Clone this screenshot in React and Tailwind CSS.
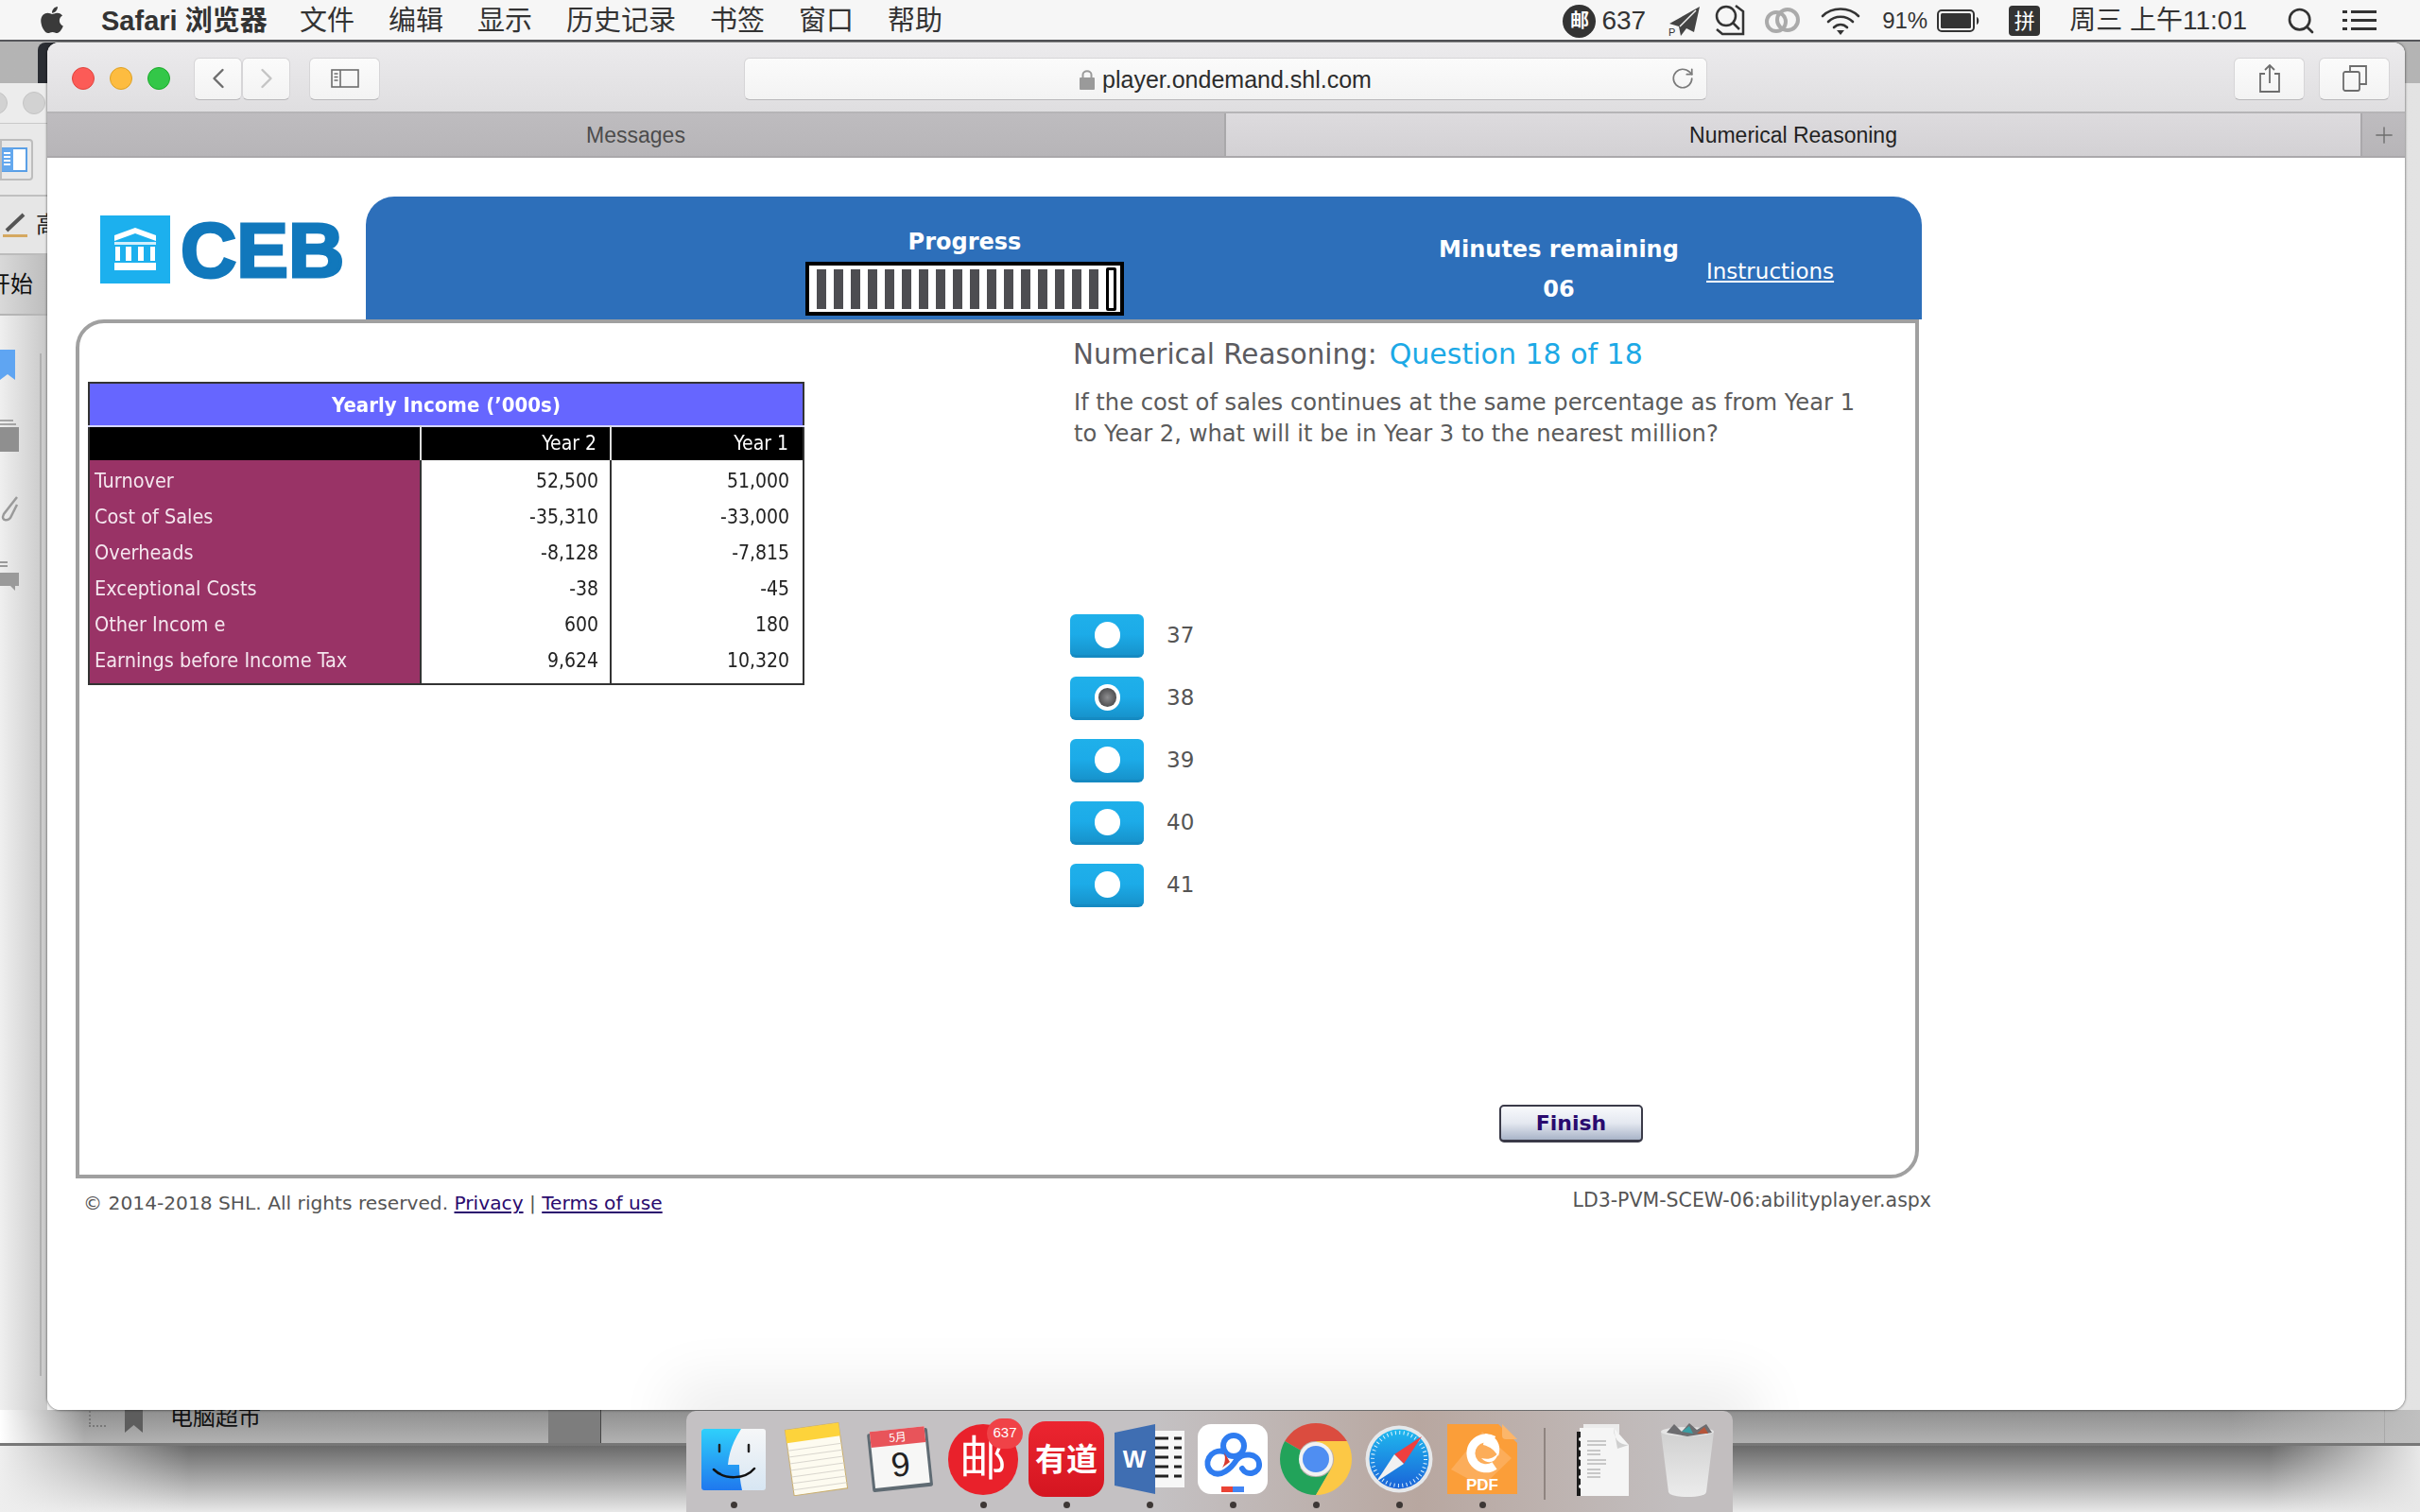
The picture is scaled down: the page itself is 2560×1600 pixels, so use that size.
import { ChevronLeft, ChevronRight, RotateCw, Search, Plus } from "lucide-react";
import { FaApple } from "react-icons/fa";

const sans = "[font-family:'Liberation_Sans','Noto_Sans_CJK_SC',sans-serif]";
const verdana = "[font-family:'DejaVu_Sans',sans-serif]";
const scanned = "[font-family:'DejaVu_Sans_Condensed','Liberation_Sans',sans-serif]";

const menus = ["文件", "编辑", "显示", "历史记录", "书签", "窗口", "帮助"];

const rows = [
  ["Turnover", "52,500", "51,000"],
  ["Cost of Sales", "-35,310", "-33,000"],
  ["Overheads", "-8,128", "-7,815"],
  ["Exceptional Costs", "-38", "-45"],
  ["Other Incom e", "600", "180"],
  ["Earnings before Income Tax", "9,624", "10,320"],
];

const answers = [
  { label: "37", checked: false },
  { label: "38", checked: true },
  { label: "39", checked: false },
  { label: "40", checked: false },
  { label: "41", checked: false },
];

function MenuBar() {
  return (
    <div className={`flex items-center h-[44px] pt-[4px] pr-[46px] bg-[#f6f6f6] border-b-2 border-[#55565a] text-[#333] text-[29px] ${sans}`}>
      <FaApple className="ml-[40px] w-[30px] h-[32px] -mt-[4px] text-[#3a3a3a]" />
      <span className="ml-[37px] font-bold w-[172px] whitespace-nowrap">Safari 浏览器</span>
      <div className="flex ml-[38px] gap-[36px]">
        {menus.map((m) => (
          <span key={m} className="whitespace-nowrap">{m}</span>
        ))}
      </div>
      <div className="ml-auto -mt-[2px] flex items-center text-[28px]">
        <div className="w-[35px] h-[35px] rounded-full bg-[#333] text-white text-[20px] flex items-center justify-center font-bold">邮</div>
        <span className="ml-[6px] text-[#333]">637</span>
        <svg className="ml-[24px]" width="34" height="34" viewBox="0 0 34 34">
          <path d="M33 2 L1 20 L11 23 L13 33 L19 25 L27 29 Z" fill="#444" />
          <path d="M29 6 L12 23" stroke="#f6f6f6" strokeWidth="1.5" />
          <text x="0" y="33" fontSize="11" fill="#333">P</text>
        </svg>
        <svg className="ml-[13px]" width="34" height="36" viewBox="0 0 34 36" fill="none" stroke="#333" strokeWidth="2.5">
          <circle cx="14" cy="13" r="10" />
          <path d="M21 20 L28 27 M24 2 L32 8 V32 H10 L4 27" />
        </svg>
        <svg className="ml-[20px]" width="38" height="28" viewBox="0 0 38 28" fill="none" stroke="#aaa" strokeWidth="4">
          <circle cx="13" cy="15" r="10" />
          <circle cx="25" cy="13" r="11" />
        </svg>
        <svg className="ml-[22px]" width="42" height="32" viewBox="0 0 42 32" fill="none" stroke="#333" strokeWidth="2.6" strokeLinecap="round">
          <path d="M2 11 C12 1 30 1 40 11" />
          <path d="M8 17 C15 10 27 10 34 17" />
          <path d="M14 23 C18 19 24 19 28 23" />
          <path d="M21 31 L17 26 H25 Z" fill="#333" stroke="none" />
        </svg>
        <span className="ml-[23px] text-[24px]">91%</span>
        <svg className="ml-[10px]" width="46" height="24" viewBox="0 0 46 24">
          <rect x="1" y="1" width="38" height="22" rx="4" fill="none" stroke="#333" strokeWidth="2" />
          <rect x="4" y="4" width="32" height="16" rx="1.5" fill="#333" />
          <path d="M42 8 C45 9 45 15 42 16 Z" fill="#333" />
        </svg>
        <div className="ml-[30px] w-[33px] h-[32px] rounded-[4px] bg-[#333] text-white text-[22px] flex items-center justify-center">拼</div>
        <span className="ml-[31px] text-[#333] whitespace-nowrap">周三 上午11:01</span>
        <Search className="ml-[41px] text-[#333]" size={32} strokeWidth={2} />
        <svg className="ml-[28px]" width="36" height="24" viewBox="0 0 36 24" fill="#333">
          <rect x="0" y="1" width="5" height="3" />
          <rect x="9" y="1" width="27" height="3" />
          <rect x="0" y="10" width="5" height="3" />
          <rect x="9" y="10" width="27" height="3" />
          <rect x="0" y="19" width="5" height="3" />
          <rect x="9" y="19" width="27" height="3" />
        </svg>
      </div>
    </div>
  );
}

function ToolButton({ className, children }) {
  return (
    <div className={`h-[45px] rounded-[6px] bg-linear-to-b from-[#fbfbfb] to-[#f3f3f3] border border-[#d6d5d7] border-b-[#b9b8ba] flex items-center justify-center ${className}`}>
      {children}
    </div>
  );
}

function Toolbar() {
  return (
    <div className="relative flex items-center h-[75px] pl-[26px] pt-[3px] bg-linear-to-b from-[#ecebed] to-[#dfdee0] border-b-2 border-[#b5b4b6]">
      <div className="w-[24px] h-[24px] rounded-full bg-[#fc5b57] border border-[#e0443e]" />
      <div className="w-[24px] h-[24px] rounded-full bg-[#fdbc40] border border-[#dea123] ml-[16px]" />
      <div className="w-[24px] h-[24px] rounded-full bg-[#33c748] border border-[#1aab29] ml-[16px]" />
      <ToolButton className="w-[51px] ml-[25px]">
        <ChevronLeft size={36} strokeWidth={1.6} className="text-[#6d6d6d]" />
      </ToolButton>
      <ToolButton className="w-[51px]">
        <ChevronRight size={36} strokeWidth={1.6} className="text-[#c4c4c4]" />
      </ToolButton>
      <ToolButton className="w-[75px] ml-[20px]">
        <svg width="30" height="20" viewBox="0 0 30 20" fill="none" stroke="#6d6d6d" strokeWidth="1.6">
          <rect x="1" y="1" width="28" height="18" />
          <path d="M10 1 V19 M3.5 5 H7.5 M3.5 8.5 H7.5 M3.5 12 H7.5" />
        </svg>
      </ToolButton>
      <ToolButton className="relative w-[1019px] ml-[385px] text-[25px] text-[#2c2c2c]">
        <svg className="mr-[8px] mt-[2px]" width="16" height="22" viewBox="0 0 16 22" fill="#9a9a9a">
          <rect x="0" y="9" width="16" height="13" rx="1" />
          <path d="M3.5 9 V6 C3.5 1 12.5 1 12.5 6 V9" fill="none" stroke="#9a9a9a" strokeWidth="2" />
        </svg>
        <span className={`mt-[3px] ${sans}`}>player.ondemand.shl.com</span>
        <RotateCw size={26} strokeWidth={1.6} className="absolute right-[12px] text-[#7b7b7b]" />
      </ToolButton>
      <ToolButton className="w-[75px] ml-[557px]">
        <svg width="22" height="30" viewBox="0 0 22 30" fill="none" stroke="#6d6d6d" strokeWidth="1.8">
          <path d="M6 10 H1 V29 H21 V10 H16 M11 20 V1 M6 6 L11 1 L16 6" />
        </svg>
      </ToolButton>
      <ToolButton className="w-[75px] ml-[15px]">
        <svg width="26" height="28" viewBox="0 0 26 28" fill="none" stroke="#6d6d6d" strokeWidth="1.8">
          <rect x="1" y="7" width="17" height="20" rx="2" />
          <path d="M8 7 V1 H25 V20 H18" />
        </svg>
      </ToolButton>
    </div>
  );
}

function TabBar() {
  return (
    <div className={`flex h-[47px] text-[23px] ${sans}`}>
      <div className="w-[1245px] pt-[2px] flex items-center justify-center bg-linear-to-b from-[#bebcbf] to-[#b7b5b8] border-b-2 border-[#aaa8ab] text-[#4c4c4c]">
        Messages
      </div>
      <div className="w-[1202px] pt-[2px] flex items-center justify-center bg-linear-to-b from-[#dddbde] to-[#d3d1d4] border-l-2 border-b-2 border-l-[#a9a8aa] border-b-[#aaa8ab] text-[#222]">
        Numerical Reasoning
      </div>
      <div className="flex-1 flex items-center justify-center bg-linear-to-b from-[#bebcbf] to-[#b7b5b8] border-l-2 border-b-2 border-[#aaa8ab]">
        <Plus size={28} strokeWidth={1.2} className="text-[#6e6e6e]" />
      </div>
    </div>
  );
}

function CebLogo() {
  return (
    <div className="w-[307px] pl-[26px] pt-[20px] flex items-start">
      <div className="w-[74px] h-[72px] bg-[#1cb0ee] flex items-center justify-center">
        <svg width="44" height="46" viewBox="0 0 44 46" fill="#fff">
          <path d="M22 0 L44 8 V14 L22 6 L0 14 V8 Z" />
          <path d="M0 15 H44 V18 H0 Z" opacity="0.8" />
          <rect x="1" y="20" width="5" height="15" />
          <rect x="12" y="20" width="6" height="15" />
          <rect x="25" y="20" width="6" height="15" />
          <rect x="38" y="20" width="5" height="15" />
          <rect x="0" y="37" width="44" height="8" />
        </svg>
      </div>
      <span className={`ml-[11px] -mt-[6px] text-[82px] leading-[86px] font-black text-[#1178bc] ${sans} [-webkit-text-stroke:3px_#1178bc]`}>CEB</span>
    </div>
  );
}

function ProgressBar() {
  return (
    <div className="flex items-center gap-[8px] w-[337px] h-[57px] bg-white border-[4px] border-black pl-[8px]">
      {Array.from({ length: 17 }).map((_, i) => (
        <div key={i} className="w-[10px] h-[42px] bg-[#4d4d51]" />
      ))}
      <div className="w-[11px] h-[46px] bg-white border-[3px] border-black rounded-[2px]" />
    </div>
  );
}

function Header() {
  return (
    <div className={`flex w-[1646px] h-[130px] rounded-t-[30px] bg-[#2d6fba] text-white ${verdana}`}>
      <div className="flex flex-col items-center w-[337px] ml-[465px] pt-[33px]">
        <span className="text-[24px] leading-[30px] font-bold">Progress</span>
        <div className="mt-[6px]">
          <ProgressBar />
        </div>
      </div>
      <div className="flex flex-col items-center w-[260px] ml-[330px] pt-[40px]">
        <span className="text-[24px] leading-[32px] font-bold whitespace-nowrap">Minutes remaining</span>
        <span className="text-[24px] leading-[32px] font-bold mt-[10px]">06</span>
      </div>
      <a className="ml-[26px] mt-[64px] h-[32px] text-[23px] leading-[30px] underline">Instructions</a>
    </div>
  );
}

function IncomeTable() {
  return (
    <table className={`w-[756px] table-fixed border-collapse border-2 border-[#333] text-[21px] blur-[0.4px] ${scanned}`}>
      <colgroup>
        <col className="w-[351px]" />
        <col className="w-[201px]" />
        <col className="w-[204px]" />
      </colgroup>
      <thead>
        <tr className="h-[46px] bg-[#6666ff] text-white border-b-2 border-[#d5d5ff]">
          <th colSpan={3} className="font-bold text-[22px]">Yearly Income (’000s)</th>
        </tr>
        <tr className="h-[36px] bg-black text-white">
          <th />
          <th className="font-normal text-right pr-[14px] border-l-2 border-[#ddd]">Year 2</th>
          <th className="font-normal text-right pr-[15px] border-l-2 border-[#ddd]">Year 1</th>
        </tr>
      </thead>
      <tbody>
        <tr className="h-[3px]">
          <td className="bg-[#993366] p-0" />
          <td className="border-l-2 border-[#333] p-0" />
          <td className="border-l-2 border-[#333] p-0" />
        </tr>
        {rows.map((r) => (
          <tr key={r[0]} className="h-[38px]">
            <td className="bg-[#993366] text-[#f4e6ee] text-[21.5px] pl-[5px] whitespace-nowrap">{r[0]}</td>
            <td className="text-right text-[#222] pt-[2px] pr-[12px] border-l-2 border-[#333]">{r[1]}</td>
            <td className="text-right text-[#222] pt-[2px] pr-[14px] border-l-2 border-[#333]">{r[2]}</td>
          </tr>
        ))}
        <tr className="h-[6px]">
          <td className="bg-[#993366] p-0" />
          <td className="border-l-2 border-[#333] p-0" />
          <td className="border-l-2 border-[#333] p-0" />
        </tr>
      </tbody>
    </table>
  );
}

function Radio({ label, checked }) {
  return (
    <div className="flex items-center h-[46px]">
      <div className="w-[78px] h-[46px] rounded-[6px] bg-linear-to-b from-[#1fb0ea] via-[#1cabe8] to-[#1793cc] border-b-[3px] border-[#158ac2] flex items-center justify-center">
        <div className="w-[27px] h-[28px] rounded-full bg-white flex items-center justify-center">
          {checked && <div className="w-[19px] h-[20px] rounded-full bg-radial from-[#8e8e90] to-[#38383a]" />}
        </div>
      </div>
      <span className="ml-[24px] -mt-[2px] text-[23px] text-[#555]">{label}</span>
    </div>
  );
}

function QuestionCard() {
  return (
    <div className={`flex items-start w-[1950px] h-[909px] border-[4px] border-[#a0a0a0] rounded-tl-[30px] rounded-br-[30px] bg-white ${verdana}`}>
      <div className="w-[1039px] ml-[9px] mt-[62px]">
        <IncomeTable />
      </div>
      <div className="mt-[13px]">
        <div className="ml-[3px] h-[40px] text-[29.4px] leading-[40px] whitespace-nowrap text-[#5b5b60]">
          Numerical Reasoning:<span className="ml-[13px] text-[30px] text-[#1ca9e6]">Question 18 of 18</span>
        </div>
        <p className="ml-[4px] mt-[15px] text-[24.2px] leading-[33px] whitespace-nowrap text-[#5b5b5b]">
          If the cost of sales continues at the same percentage as from Year 1<br />
          to Year 2, what will it be in Year 3 to the nearest million?
        </p>
        <div className="flex flex-col gap-[20px] mt-[174px]">
          {answers.map((a) => (
            <Radio key={a.label} label={a.label} checked={a.checked} />
          ))}
        </div>
        <button className="block ml-[454px] mt-[209px] w-[152px] h-[40px] rounded-[5px] border-2 border-[#3a3a48] border-b-[3px] bg-linear-to-b from-[#f8f9fc] via-[#e4e8f0] to-[#a9b4c8] text-[22px] font-bold leading-[34px] text-[#2a0a6e]">
          Finish
        </button>
      </div>
    </div>
  );
}

function Footer() {
  return (
    <div className={`flex justify-between w-[1963px] pl-[8px] text-[#555] text-[20.5px] ${verdana}`}>
      <span className="mt-[11px] text-[20.2px] leading-[30px] whitespace-nowrap">
        © 2014-2018 SHL. All rights reserved. <a className="text-[#2a0a6e] underline">Privacy</a> | <a className="text-[#2a0a6e] underline">Terms of use</a>
      </span>
      <span className="mt-[8px] leading-[30px] whitespace-nowrap">LD3-PVM-SCEW-06:abilityplayer.aspx</span>
    </div>
  );
}

function SafariWindow() {
  return (
    <div className="absolute left-[50px] top-[45px] w-[2494px] h-[1447px] flex flex-col rounded-t-[12px] rounded-b-[14px] overflow-hidden bg-white shadow-[0_0_3px_rgba(0,0,0,0.7)]">
      <Toolbar />
      <TabBar />
      <div className="relative flex-1 bg-white">
        <div className="w-[1990px] ml-[30px] pt-[41px]">
          <div className="flex h-[130px]">
            <CebLogo />
            <Header />
          </div>
          <QuestionCard />
          <Footer />
        </div>
        {/* soft glow the dock throws up on the page */}
        <div className="absolute left-[690px] w-[1090px] -bottom-[20px] h-[20px] shadow-[0_0_60px_30px_rgba(0,0,0,0.07)]" />
      </div>
    </div>
  );
}

// the window behind Safari, only its left strip and bottom edge show
function BackWindow() {
  return (
    <div className={`absolute left-0 top-[88px] w-[2560px] h-[1442px] flex flex-col ${sans}`}>
      <div className="flex-1 flex bg-linear-to-r from-[#f1f1f1] via-[#d8d8d8] to-[#e3e3e3]">
        <div className="w-[50px] flex flex-col overflow-hidden">
          <div className="h-[43px] flex items-center gap-[16px] -ml-[16px] bg-[#ececec] border-b border-[#c9c9c9]">
            <div className="w-[24px] h-[24px] rounded-full bg-[#d2d2d2] border border-[#c4c4c4]" />
            <div className="w-[24px] h-[24px] rounded-full bg-[#d2d2d2] border border-[#c4c4c4]" />
          </div>
          <div className="h-[77px] flex items-center bg-[#e9e9e9] border-b-2 border-[#c0c0c0]">
            <div className="w-[35px] h-[44px] rounded-r-[4px] border-2 border-[#bdbdbd] flex items-center">
              <svg width="28" height="28" viewBox="0 0 28 28">
                <rect x="-4" y="2" width="30" height="24" fill="#fff" stroke="#5a9fe6" strokeWidth="2" />
                <rect x="-4" y="2" width="16" height="24" fill="#64a8ee" />
                <path d="M2 7 H9 M2 11 H9 M2 15 H9 M2 19 H9" stroke="#fff" strokeWidth="2" />
              </svg>
            </div>
          </div>
          <div className="h-[62px] flex items-center bg-[#e6e6e6] border-b-2 border-[#bcbcbc] pl-[3px] text-[24px] gap-[9px] whitespace-nowrap">
            <svg className="shrink-0" width="26" height="28" viewBox="0 0 26 28">
              <path d="M4 20 L22 3" stroke="#555" strokeWidth="4" />
              <rect x="0" y="24" width="26" height="3" fill="#d5a860" />
            </svg>
            <span className="text-[#222]">高</span>
          </div>
          <div className="h-[64px] flex items-center bg-linear-to-r from-[#e0e0e0] to-[#bdbdbd] border-b-2 border-[#b5b5b5] -ml-[13px] text-[24px] text-[#111]">
            开始
          </div>
          <div className="relative flex-1 bg-linear-to-r from-[#efefef] to-[#c8c8c8]">
            <div className="absolute left-[42px] top-[40px] bottom-[36px] w-[2px] bg-[#b0b0b0]" />
            <svg className="mt-[36px]" width="16" height="32" viewBox="0 0 16 32" fill="#5fa5f2">
              <path d="M0 0 H16 V32 L8 26 L0 32 Z" />
            </svg>
            <svg className="mt-[42px]" width="20" height="34" viewBox="0 0 20 34" fill="#8f8f8f">
              <rect x="0" y="8" width="20" height="26" />
              <path d="M0 1 H14 M0 5 H17" stroke="#8f8f8f" strokeWidth="1.5" />
            </svg>
            <svg className="mt-[42px]" width="20" height="34" viewBox="0 0 20 34" fill="none" stroke="#9a9a9a" strokeWidth="2.5">
              <path d="M18 6 L4 24 C0 32 10 32 12 26 L18 14" />
            </svg>
            <svg className="mt-[40px]" width="20" height="32" viewBox="0 0 20 32" fill="#9a9a9a">
              <path d="M0 1 H8 M0 5 H8" stroke="#9a9a9a" strokeWidth="2" />
              <path d="M0 12 H20 V26 H16 V31 L11 26 H0 Z" />
            </svg>
          </div>
        </div>
      </div>
      <div className="relative h-[38px] flex border-b-[3px] border-[#777] bg-linear-to-b from-[#8f8f8f] to-[#b2b2b2] overflow-hidden">
        <div className="absolute left-0 top-0 bottom-0 w-[90px] bg-linear-to-r from-white to-transparent" />
        <div className="absolute left-[94px] -top-[2px] w-[18px] h-[20px] border-l-2 border-b-2 border-dotted border-[#777]" />
        <svg className="absolute left-[132px] top-0" width="19" height="24" viewBox="0 0 19 24" fill="#5d5d5d">
          <path d="M0 0 H19 V24 L9.5 16 L0 24 Z" />
        </svg>
        <span className="absolute left-[180px] -top-[10px] text-[24px] text-[#111]">电脑超市</span>
        <div className="absolute left-[580px] top-0 bottom-0 w-[56px] bg-[#7d7d7d] border-r border-[#444]" />
        <div className="absolute left-[2522px] top-0 bottom-0 w-px bg-[#444]" />
        <div className="absolute right-0 top-0 bottom-0 w-[200px] bg-linear-to-r from-transparent to-[#c0c0c0]" />
      </div>
    </div>
  );
}

function FinderIcon() {
  return (
    <svg width="68" height="65" viewBox="0 0 68 65">
      <defs>
        <linearGradient id="fa" x1="0" y1="0" x2="0" y2="1">
          <stop offset="0" stopColor="#2fd0fb" />
          <stop offset="1" stopColor="#1f78ee" />
        </linearGradient>
        <linearGradient id="fb" x1="0" y1="0" x2="0" y2="1">
          <stop offset="0" stopColor="#f6f7f8" />
          <stop offset="1" stopColor="#d7e6f3" />
        </linearGradient>
      </defs>
      <rect width="68" height="65" rx="3" fill="url(#fb)" />
      <path d="M3 0 H42 C34 12 29 25 28 38 H40 C40 47 41 56 43 65 H3 Q0 65 0 62 V3 Q0 0 3 0 Z" fill="url(#fa)" />
      <path d="M19 17 V24 M50 17 V24" stroke="#222" strokeWidth="2.5" strokeLinecap="round" />
      <path d="M13 43 C24 54 46 54 56 42" stroke="#111" strokeWidth="2.5" fill="none" strokeLinecap="round" />
    </svg>
  );
}

function NotesIcon() {
  return (
    <svg width="70" height="78" viewBox="0 0 70 78">
      <g transform="rotate(-8 35 39)">
        <rect x="6" y="4" width="57" height="70" fill="#fdfbf0" stroke="#c9ad6b" strokeWidth="1" />
        <rect x="6" y="4" width="57" height="14" fill="#fdd33b" />
        {[26, 33, 40, 47, 54, 61, 68].map((y) => (
          <path key={y} d={`M6 ${y} H63`} stroke="#d9d6ce" strokeWidth="1" />
        ))}
      </g>
    </svg>
  );
}

function CalendarIcon() {
  return (
    <svg width="72" height="76" viewBox="0 0 72 76">
      <g transform="rotate(-6 36 38)">
        <rect x="4" y="8" width="64" height="62" rx="2" fill="#5f6b73" />
        <rect x="7" y="6" width="58" height="60" fill="#f7f7f6" />
        <rect x="7" y="6" width="58" height="17" fill="#e8545a" />
        <text x="36" y="19" fontSize="12" fill="#fff" textAnchor="middle" fontFamily="Noto Sans CJK SC">5月</text>
        <text x="36" y="56" fontSize="36" fill="#222" textAnchor="middle" fontFamily="Liberation Sans">9</text>
      </g>
    </svg>
  );
}

function MailIcon() {
  return (
    <div className="relative w-[74px] h-[75px] rounded-full bg-[#e9212b] flex items-center justify-center">
      <span className="text-[50px] leading-none text-white">邮</span>
      <div className="absolute -right-[5px] -top-[6px] w-[38px] h-[32px] rounded-full bg-[#f04247] text-white text-[15px] flex items-center justify-center">637</div>
    </div>
  );
}

function YoudaoIcon() {
  return (
    <div className="w-[80px] h-[80px] rounded-[18px] bg-linear-to-b from-[#ec2530] to-[#d41520] flex items-center justify-center">
      <span className="text-[33px] leading-none font-bold text-white whitespace-nowrap">有道</span>
    </div>
  );
}

function WordIcon() {
  return (
    <svg width="76" height="76" viewBox="0 0 76 76">
      <rect x="42" y="8" width="33" height="60" fill="#f7f7f7" />
      {[16, 26, 36, 46, 56].map((y) => (
        <path key={y} d={`M44 ${y} H72`} stroke="#222" strokeWidth="3" strokeDasharray="14 6" />
      ))}
      <path d="M1 10 L44 1 V75 L1 66 Z" fill="#3f6eb2" />
      <text x="22" y="47" fontSize="26" fontWeight="bold" fill="#fff" textAnchor="middle" fontFamily="Liberation Sans">W</text>
    </svg>
  );
}

function BaiduIcon() {
  return (
    <svg width="74" height="74" viewBox="0 0 74 74">
      <rect width="74" height="74" rx="14" fill="#fff" />
      <g fill="none" stroke="#2f7cf0" strokeWidth="6" strokeLinecap="round">
        <circle cx="38" cy="23" r="11" />
        <path d="M28 29 C12 26 6 42 14 50 C24 58 36 46 41 38 C47 30 64 30 65 42 C66 52 52 56 47 47" />
      </g>
      <path d="M28 30 L34 40 L26 46 C30 40 29 34 28 30 Z" fill="#d93a2e" />
      <rect x="25" y="66" width="12" height="6" fill="#ea4335" />
      <rect x="37" y="66" width="12" height="6" fill="#4285f4" />
    </svg>
  );
}

function ChromeIcon() {
  return (
    <svg width="76" height="78" viewBox="0 0 76 76">
      <path d="M5.1 19 A38 38 0 0 1 70.9 19 H38 A19 19 0 0 0 21.5 28.5 Z" fill="#db4c3f" />
      <path d="M5.1 19 A38 38 0 0 0 38 76 L54.5 47.5 A19 19 0 0 1 21.5 47.5 L21.5 28.5 Z" fill="#22a35a" />
      <path d="M70.9 19 A38 38 0 0 1 38 76 L54.5 47.5 A19 19 0 0 0 54.5 28.5 L38 19 Z" fill="#fcc845" />
      <circle cx="38" cy="38" r="18" fill="#f2f2f2" />
      <circle cx="38" cy="38" r="14" fill="#4f8ef2" />
    </svg>
  );
}

function SafariIcon() {
  return (
    <svg width="72" height="74" viewBox="0 0 72 72">
      <defs>
        <linearGradient id="sa" x1="0" y1="0" x2="0" y2="1">
          <stop offset="0" stopColor="#1fb8ee" />
          <stop offset="1" stopColor="#1a63d8" />
        </linearGradient>
      </defs>
      <circle cx="36" cy="36" r="35.5" fill="#e6e8ea" />
      <circle cx="36" cy="36" r="31.5" fill="url(#sa)" />
      <circle cx="36" cy="36" r="28" fill="none" stroke="#dff2fc" strokeWidth="4" strokeDasharray="1 3.4" />
      <path d="M60 12 L31 31 L41 41 Z" fill="#ef3f3f" />
      <path d="M12 60 L31 31 L41 41 Z" fill="#f1f1f1" />
    </svg>
  );
}

function PdfIcon() {
  return (
    <svg width="74" height="74" viewBox="0 0 74 74">
      <path d="M0 0 H54 L74 20 V74 H0 Z" fill="#fb9e39" />
      <path d="M58 0 L74 16 H62 Q58 16 58 12 Z" fill="#fcb66a" />
      <path d="M37 8 L68 36 L37 66 L4 48 Z" fill="#fcb368" opacity="0.7" />
      <path d="M49 17 A16 16 0 1 0 50 44" fill="none" stroke="#fff" strokeWidth="9" />
      <path d="M40 10 C52 12 58 22 54 34 C50 28 46 24 38 22 Z" fill="#fff" />
      <path d="M36 36 C44 38 50 36 54 30 C52 40 44 44 36 36 Z" fill="#fff" />
      <text x="37" y="70" fontSize="17" fontWeight="bold" fill="#fff" textAnchor="middle" fontFamily="Liberation Sans">PDF</text>
    </svg>
  );
}

function PaperIcon() {
  return (
    <svg width="60" height="82" viewBox="0 0 60 82">
      <rect x="8" y="4" width="38" height="10" fill="#ececec" />
      <path d="M4 8 H40 L56 26 V80 H4 Z" fill="#f5f5f5" />
      <path d="M40 8 C40 20 46 26 56 26 L44 30 Z" fill="#cfcfcf" />
      <rect x="1" y="12" width="4" height="68" fill="#1b1b1b" />
      {[20, 30, 40, 50, 60, 70].map((y) => (
        <circle key={y} cx="5" cy={y} r="2" fill="#f5f5f5" />
      ))}
      {[22, 26, 32, 36, 42, 46, 52, 56, 60].map((y) => (
        <path key={y} d={`M12 ${y} H${y % 4 === 0 ? 26 : 32}`} stroke="#9a9a9a" strokeWidth="1" />
      ))}
    </svg>
  );
}

function TrashIcon() {
  return (
    <svg width="60" height="82" viewBox="0 0 60 82">
      <defs>
        <linearGradient id="tr" x1="0" y1="0" x2="0" y2="1">
          <stop offset="0" stopColor="#d0d0d0" />
          <stop offset="1" stopColor="#ececec" />
        </linearGradient>
      </defs>
      <path d="M2 12 H58 L50 76 Q48 81 30 81 Q12 81 10 76 Z" fill="url(#tr)" />
      <ellipse cx="30" cy="12" rx="28" ry="5" fill="#e4e4e4" />
      <path d="M8 13 L16 4 L24 12 L32 3 L40 10 L50 4 L56 13 L30 17 Z" fill="#6d6d70" />
      <path d="M24 12 L32 6 L36 14 Z" fill="#3aa0a5" />
      <path d="M40 14 L48 7 L52 14 Z" fill="#b5553a" />
    </svg>
  );
}

const dockItems = [
  { key: "finder", icon: <FinderIcon />, dot: true },
  { key: "notes", icon: <NotesIcon />, dot: false },
  { key: "calendar", icon: <CalendarIcon />, dot: false },
  { key: "mail", icon: <MailIcon />, dot: true },
  { key: "youdao", icon: <YoudaoIcon />, dot: true },
  { key: "word", icon: <WordIcon />, dot: true },
  { key: "baidu", icon: <BaiduIcon />, dot: true },
  { key: "chrome", icon: <ChromeIcon />, dot: true },
  { key: "safari", icon: <SafariIcon />, dot: true },
  { key: "pdf", icon: <PdfIcon />, dot: true },
];

function DockItem({ icon, dot }) {
  return (
    <div className="w-[88px] flex flex-col items-center">
      <div className="h-[84px] flex items-center justify-center">{icon}</div>
      {dot && <div className="mt-[3px] w-[7px] h-[7px] rounded-full bg-[#3d3735]" />}
    </div>
  );
}

function Dock() {
  return (
    <div className={`absolute left-[726px] top-[1493px] w-[1107px] h-[107px] flex pl-[6px] pt-[9px] rounded-t-[10px] bg-linear-to-r from-[#c4c1c3] from-45% via-[#b8a7a0] via-70% to-[#c2bebf] to-95% ${sans}`}>
      {dockItems.map((d) => (
        <DockItem key={d.key} icon={d.icon} dot={d.dot} />
      ))}
      <div className="ml-[21px] mr-[18px] mt-[9px] w-[2px] h-[76px] bg-[#8f8480]" />
      <DockItem icon={<PaperIcon />} dot={false} />
      <DockItem icon={<TrashIcon />} dot={false} />
    </div>
  );
}

export default function App() {
  return (
    <div className="relative w-[2560px] h-[1600px] overflow-hidden bg-linear-to-b from-[#b4b4b4] via-[#b4b4b4] to-[#e8e8e8]">
      <div className="absolute left-0 right-0 top-[1530px] h-[70px] bg-linear-to-b from-[#6a6a6a] to-[#e8e8e8]" />
      <div className="absolute left-0 top-[1530px] w-[200px] h-[70px] bg-linear-to-r from-[#eeeeee] to-transparent" />
      <div className="absolute right-0 top-[1530px] w-[160px] h-[70px] bg-linear-to-r from-transparent to-[#e8e8e8]" />
      <MenuBar />
      <div className="absolute left-[40px] top-[45px] w-[20px] h-[50px] rounded-tl-[8px] bg-[#2a2d33]" />
      <BackWindow />
      <SafariWindow />
      <Dock />
    </div>
  );
}
